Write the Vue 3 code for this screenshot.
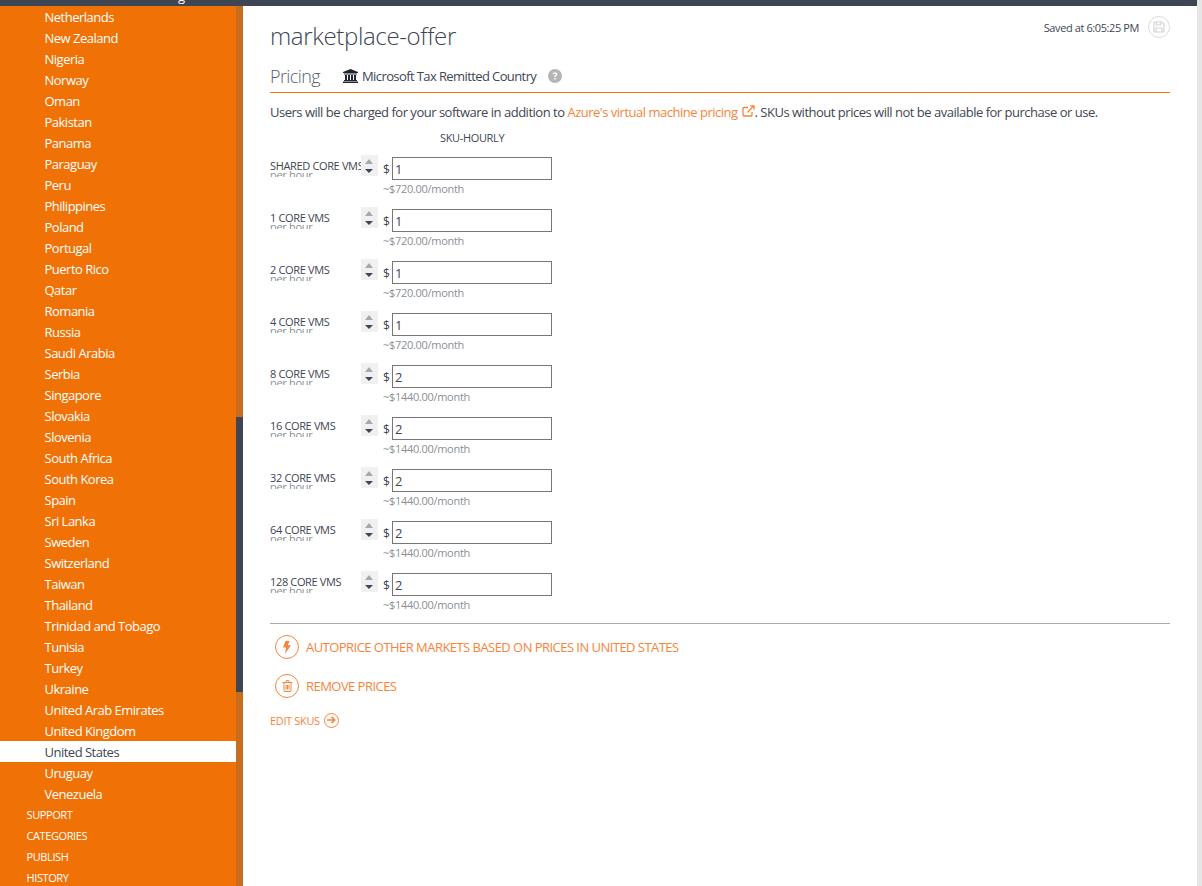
<script setup>
const countries = [
  'Netherlands', 'New Zealand', 'Nigeria', 'Norway', 'Oman', 'Pakistan', 'Panama', 'Paraguay', 'Peru',
  'Philippines', 'Poland', 'Portugal', 'Puerto Rico', 'Qatar', 'Romania', 'Russia', 'Saudi Arabia',
  'Serbia', 'Singapore', 'Slovakia', 'Slovenia', 'South Africa', 'South Korea', 'Spain', 'Sri Lanka',
  'Sweden', 'Switzerland', 'Taiwan', 'Thailand', 'Trinidad and Tobago', 'Tunisia', 'Turkey', 'Ukraine',
  'United Arab Emirates', 'United Kingdom', 'United States', 'Uruguay', 'Venezuela'
]
const sections = ['SUPPORT', 'CATEGORIES', 'PUBLISH', 'HISTORY']
const skus = [
  { name: 'SHARED CORE VMS', price: 1 },
  { name: '1 CORE VMS', price: 1 },
  { name: '2 CORE VMS', price: 1 },
  { name: '4 CORE VMS', price: 1 },
  { name: '8 CORE VMS', price: 2 },
  { name: '16 CORE VMS', price: 2 },
  { name: '32 CORE VMS', price: 2 },
  { name: '64 CORE VMS', price: 2 },
  { name: '128 CORE VMS', price: 2 }
]
const monthly = (price) => '~$' + (price * 720).toFixed(2) + '/month'
</script>

<template>
  <div class="page">
    <div class="column">
      <div class="topbar"><span class="cut">g</span></div>
      <div class="body">
        <aside class="sidebar">
          <ul class="nav">
            <li v-for="c in countries" :key="c" class="country" :class="{ active: c === 'United States' }">{{ c }}</li>
            <li v-for="s in sections" :key="s" class="section">{{ s }}</li>
          </ul>
          <div class="scroll-track"><div class="scroll-thumb"></div></div>
        </aside>
        <main class="main">
          <div class="saved">
            <span>Saved at 6:05:25 PM</span>
            <span class="save-btn">
              <svg width="12" height="12" viewBox="0 0 12 12" fill="none" stroke="#d4d4d4" stroke-width="1.2">
                <path d="M1 1h8l2 2v8H1z" />
                <path d="M3.5 1v3h4V1M3 11V7h6v4" />
              </svg>
            </span>
          </div>
          <h1 class="title">marketplace-offer</h1>
          <div class="tabs">
            <span class="tab-name">Pricing</span>
            <svg class="bank" width="15" height="14" viewBox="0 0 15 14" fill="#1f2530">
              <path d="M7.5 0 15 3v1H0V3z" />
              <path d="M1 4.500h13v1H1zM2 6h2v5H2zM5 6h2v5H5zM8 6h2v5H8zM11 6h2v5h-2zM1 11h13v1H1zM0 12.500h15V14H0z" />
            </svg>
            <span class="tax">Microsoft Tax Remitted Country</span>
            <svg class="help" width="14" height="14" viewBox="0 0 14 14">
              <circle cx="7" cy="7" r="7" fill="#b5b5b5" />
              <path d="M4.700 5.300C4.800 3.900 5.800 3.200 7 3.200c1.300 0 2.400.8 2.400 2 0 1.700-1.800 1.600-1.800 2.900H6.200c0-2 1.700-1.900 1.700-2.900 0-.5-.4-.8-.9-.8-.6 0-.9.300-1 .9z" fill="#fff" />
              <rect x="6.200" y="9" width="1.500" height="1.500" fill="#fff" />
            </svg>
          </div>
          <p class="intro">
            Users will be charged for your software in addition to
            <a class="link">Azure's virtual machine pricing
              <svg class="ext" width="13" height="12" viewBox="0 0 13 12" fill="none" stroke="#f8843a" stroke-width="1.300">
                <path d="M10 7v3a1 1 0 0 1-1 1H2a1 1 0 0 1-1-1V3.500a1 1 0 0 1 1-1h4" />
                <path d="M5.500 7.500 11.500 1M8 .8h4v4" />
              </svg></a>. SKUs without prices will not be available for purchase or use.
          </p>
          <div class="sku-head">SKU-HOURLY</div>
          <div class="sku-list">
            <div v-for="s in skus" :key="s.name" class="sku-row">
              <div class="sku-label">
                <div class="sku-name">{{ s.name }}</div>
                <div class="per-hour">per hour</div>
              </div>
              <div class="stepper">
                <span class="up"></span>
                <span class="down"></span>
              </div>
              <span class="dollar">$</span>
              <div class="price">
                <input class="price-input" :value="s.price" />
                <div class="month">{{ monthly(s.price) }}</div>
              </div>
            </div>
          </div>
          <div class="actions">
            <div class="action">
              <span class="circle">
                <svg width="8" height="13" viewBox="0 0 8 13" fill="#f8843a"><path d="M2.500 0h4L4.800 4.200H8L1.800 13l1.400-6.500H0z" /></svg>
              </span>
              AUTOPRICE OTHER MARKETS BASED ON PRICES IN UNITED STATES
            </div>
            <div class="action">
              <span class="circle">
                <svg width="11" height="12" viewBox="0 0 11 12" fill="none" stroke="#f8843a" stroke-width="1"><path d="M.5 2.500h10M2 2.500v8a1 1 0 0 0 1 1h5a1 1 0 0 0 1-1v-8M3.800 2.300 4.300.5h2.400l.5 1.800M4 5v4.500M5.500 5v4.500M7 5v4.500" /></svg>
              </span>
              REMOVE PRICES
            </div>
          </div>
          <div class="edit">
            EDIT SKUS
            <span class="circle small">
              <svg width="9" height="8" viewBox="0 0 9 8" fill="none" stroke="#f8843a" stroke-width="1.600"><path d="M0 4h7.500M4.500 .8 7.700 4 4.500 7.200" /></svg>
            </span>
          </div>
        </main>
      </div>
    </div>
    <div class="edge"></div>
  </div>
</template>

<style>
html, body { margin: 0; overflow: hidden; background: #fff; }
</style>

<style scoped>
.page {
  display: flex;
  width: 1202px;
  height: 886px;
  overflow: hidden;
  font-family: "Open Sans", "Noto Sans", sans-serif;
  color: #3e4653;
}
.column {
  flex: 1;
  min-width: 0;
}
.edge {
  width: 5px;
  flex: none;
  background: #e6e6e6;
}
.topbar {
  height: 6px;
  background: #3e4653;
  overflow: hidden;
  padding-left: 178px;
}
.cut {
  display: block;
  color: #fff;
  font-size: 13px;
  line-height: 13px;
  margin-top: -10px;
}
.body {
  display: flex;
  height: 880px;
}
.sidebar {
  position: relative;
  width: 243px;
  flex: none;
  background: #f07106;
  overflow: hidden;
}
.nav {
  list-style: none;
  margin: 0;
  padding: 0;
  width: 236px;
}
.country, .section {
  height: 21px;
  line-height: 23px;
  color: #fff;
  white-space: nowrap;
}
.country {
  padding-left: 44.5px;
  font-size: 13px;
  letter-spacing: -0.5px;
}
.country.active {
  background: #fff;
  color: #3e4653;
}
.section {
  padding-left: 26.5px;
  line-height: 21px;
  font-size: 11px;
  letter-spacing: -0.4px;
}
.scroll-track {
  position: absolute;
  top: 0;
  right: 0;
  bottom: 0;
  width: 7px;
  background: #c86c1e;
}
.scroll-thumb {
  position: absolute;
  top: 411px;
  left: 0;
  width: 7px;
  height: 275px;
  background: #3e4653;
}
.main {
  position: relative;
  flex: 1;
  min-width: 0;
  padding: 0 27px;
}
.saved {
  position: absolute;
  top: 10px;
  right: 27px;
  display: flex;
  align-items: center;
  gap: 9px;
  font-size: 11px;
  letter-spacing: -0.4px;
}
.save-btn {
  width: 20px;
  height: 20px;
  border: 1px solid #dcdcdc;
  border-radius: 50%;
  display: flex;
  align-items: center;
  justify-content: center;
}
.title {
  margin: 0;
  padding-top: 13px;
  font-size: 24px;
  line-height: 34px;
  font-weight: 300;
  letter-spacing: -0.35px;
}
.tabs {
  display: flex;
  align-items: center;
  height: 40px;
  box-sizing: border-box;
  padding-top: 6px;
  border-bottom: 1px solid #f07106;
  font-size: 13px;
}
.tab-name {
  font-size: 18px;
  font-weight: 300;
  letter-spacing: -0.6px;
  opacity: .85;
}
.bank { margin-left: 23px; }
.tax { margin-left: 4px; letter-spacing: -0.6px; }
.help { margin-left: 12px; }
.intro {
  margin: 9px 0 0;
  font-size: 13px;
  line-height: 20px;
  letter-spacing: -0.49px;
  white-space: nowrap;
}
.link { color: #f8843a; }
.ext { margin-left: 1px; }
.sku-head {
  margin: 9px 0 0 170px;
  font-size: 11px;
  line-height: 14px;
  letter-spacing: -0.35px;
}
.sku-list {
  margin-top: 12px;
}
.sku-row {
  display: flex;
  height: 52px;
}
.sku-label {
  width: 91px;
  height: 24px;
  margin-top: 2px;
  overflow: hidden;
  white-space: nowrap;
}
.sku-name {
  font-size: 11px;
  line-height: 14px;
  letter-spacing: -0.35px;
  height: 14px;
}
.per-hour {
  font-size: 11px;
  line-height: 10px;
  height: 7px;
  overflow: hidden;
  letter-spacing: -0.3px;
  color: #8a8f96;
  margin-top: -3px;
}
.stepper {
  width: 17px;
  height: 21px;
  margin-top: -2px;
  background: #f0f0f0;
  position: relative;
}
.up, .down {
  position: absolute;
  left: 4px;
  width: 0;
  height: 0;
  border-left: 4px solid transparent;
  border-right: 4px solid transparent;
}
.up { top: 4px; border-bottom: 5px solid #a9a9a9; }
.down { top: 14px; border-top: 4px solid #3e4653; }
.dollar {
  width: 14px;
  padding-left: 5px;
  box-sizing: border-box;
  font-size: 12px;
  line-height: 25px;
}
.price {
  display: flex;
  flex-direction: column;
}
.price-input {
  width: 160px;
  height: 23px;
  box-sizing: border-box;
  border: 1px solid #767676;
  padding: 1px 2px;
  outline: none;
  font: 13px "Open Sans", sans-serif;
  color: #3e4653;
}
.month {
  font-size: 11px;
  line-height: 18px;
  margin-left: -9px;
  letter-spacing: -0.3px;
  color: #8a8f96;
}
.actions {
  margin-top: -2px;
  padding-top: 11px;
  border-top: 1px solid #aaa;
}
.action {
  display: flex;
  align-items: center;
  gap: 7px;
  height: 24px;
  margin: 0 0 15px 5px;
  color: #f8843a;
  font-size: 13px;
  letter-spacing: -0.54px;
}
.circle {
  width: 24px;
  height: 24px;
  box-sizing: border-box;
  border: 1px solid #f8843a;
  border-radius: 50%;
  display: inline-flex;
  align-items: center;
  justify-content: center;
}
.circle.small {
  width: 15px;
  height: 15px;
  margin-left: 2px;
}
.edit {
  display: flex;
  align-items: center;
  gap: 2px;
  height: 16px;
  margin-top: -1px;
  color: #f8843a;
  font-size: 11px;
  letter-spacing: -0.35px;
}
</style>
